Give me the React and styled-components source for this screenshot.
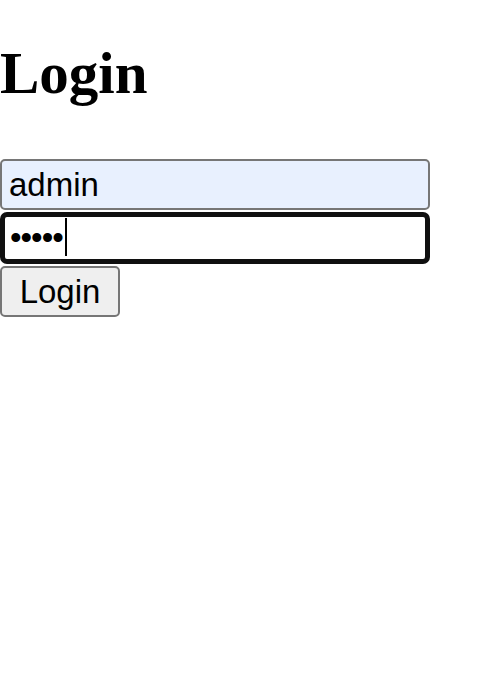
import React from "react";
import styled, { createGlobalStyle } from "styled-components";

const Global = createGlobalStyle`
  html, body { margin: 0; padding: 0; background: #fff; }
  body { font-family: "Liberation Serif", "Times New Roman", serif; }
`;

const Title = styled.h1`
  font-family: "Liberation Serif", "Times New Roman", serif;
  font-weight: 700;
  font-size: 59px;
  line-height: 66px;
  margin: 40px 0 53px;
  color: #000;
`;

const Form = styled.form`
  display: flex;
  flex-direction: column;
  align-items: flex-start;
  gap: 2px;
  margin: 0;
`;

const Field = styled.input`
  box-sizing: border-box;
  width: 430px;
  height: ${(p) => (p.$focused ? "52px" : "51px")};
  margin: 0;
  padding: ${(p) => (p.$focused ? "0 5px" : "0 7px")};
  letter-spacing: ${(p) => (p.$focused ? "-1px" : "normal")};
  font-family: "Liberation Sans", Arial, sans-serif;
  font-size: 33px;
  color: #000;
  background: ${(p) => (p.$autofill ? "#e8f0fe" : "#fff")};
  border: ${(p) => (p.$focused ? "5px solid #101010" : "2px solid #767676")};
  border-radius: ${(p) => (p.$focused ? "7px" : "5px")};
  outline: none;
  display: block;
`;

const FieldWrap = styled.div`
  position: relative;
`;

const Caret = styled.span`
  position: absolute;
  left: 65px;
  top: 6px;
  width: 2px;
  height: 38px;
  background: #000;
`;

const Button = styled.button`
  box-sizing: border-box;
  width: 120px;
  height: 51px;
  padding: 0;
  font-family: "Liberation Sans", Arial, sans-serif;
  font-size: 33px;
  color: #000;
  background: #efefef;
  border: 2px solid #767676;
  border-radius: 5px;
`;

export default function App() {
  return (
    <>
      <Global />
      <Title>Login</Title>
      <Form onSubmit={(e) => e.preventDefault()}>
        <Field $autofill type="text" defaultValue="admin" readOnly />
        <FieldWrap>
          <Field $focused type="password" defaultValue="admin" readOnly />
          <Caret />
        </FieldWrap>
        <Button type="submit">Login</Button>
      </Form>
    </>
  );
}
